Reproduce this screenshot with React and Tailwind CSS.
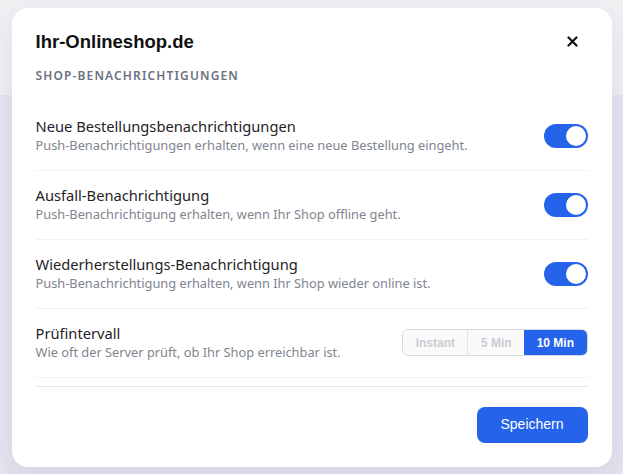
import React, { useState } from 'react';

function Toggle({ on, onChange }) {
  return (
    <button
      onClick={() => onChange(!on)}
      className={`relative w-[44px] h-[24px] rounded-full shrink-0 ${on ? 'bg-[#2563eb]' : 'bg-gray-300'}`}
    >
      <span
        className={`absolute top-[2px] w-[20px] h-[20px] rounded-full bg-white ${on ? 'left-[22px]' : 'left-[2px]'}`}
      />
    </button>
  );
}

function SettingRow({ title, desc, children }) {
  return (
    <div className="flex items-center justify-between py-[15px] border-b border-[#f1f2f4]">
      <div className="flex flex-col -mt-[1px] mb-[1px]">
        <span className="text-[14.7px] leading-[20px] text-[#1f2328]">{title}</span>
        <span className="text-[12.8px] leading-[18px] text-[#80858f]">{desc}</span>
      </div>
      {children}
    </div>
  );
}

export default function App() {
  const [orders, setOrders] = useState(true);
  const [outage, setOutage] = useState(true);
  const [restore, setRestore] = useState(true);
  const [interval, setInterval] = useState('10');

  const segments = [
    { id: 'instant', label: 'Instant' },
    { id: '5', label: '5 Min' },
    { id: '10', label: '10 Min' },
  ];

  return (
    <div className="relative min-h-screen flex items-center justify-center bg-[#e6e6f1] font-['Noto_Sans',sans-serif]">
      <div className="absolute inset-x-0 top-0 h-[95px] bg-[#f1f1f4]" />
      <div className="relative w-[600px] bg-white rounded-2xl px-6 pt-6 pb-6 shadow-[0_10px_30px_rgba(60,60,110,0.12)]">
        <div className="flex items-center justify-between h-[22px] -mt-[1px] mb-[1px]">
          <h1 className="font-['Liberation_Sans',Arial,sans-serif] text-[18.5px] font-bold text-[#111] leading-[22px]">
            Ihr-Onlineshop.de
          </h1>
          <button className="w-[22px] h-[22px] flex items-center justify-center mr-[4px]">
            <svg width="11" height="11" viewBox="0 0 11 11">
              <path d="M1.5 1.5 L9.5 9.5 M9.5 1.5 L1.5 9.5" stroke="#111" strokeWidth="2.2" strokeLinecap="round" />
            </svg>
          </button>
        </div>

        <div className="mt-[15px] mb-[18px] text-[12px] leading-[16px] font-semibold tracking-[0.095em] uppercase text-[#6b7280]">
          Shop-Benachrichtigungen
        </div>

        <SettingRow
          title="Neue Bestellungsbenachrichtigungen"
          desc="Push-Benachrichtigungen erhalten, wenn eine neue Bestellung eingeht."
        >
          <Toggle on={orders} onChange={setOrders} />
        </SettingRow>
        <SettingRow
          title="Ausfall-Benachrichtigung"
          desc="Push-Benachrichtigung erhalten, wenn Ihr Shop offline geht."
        >
          <Toggle on={outage} onChange={setOutage} />
        </SettingRow>
        <SettingRow
          title="Wiederherstellungs-Benachrichtigung"
          desc="Push-Benachrichtigung erhalten, wenn Ihr Shop wieder online ist."
        >
          <Toggle on={restore} onChange={setRestore} />
        </SettingRow>
        <SettingRow
          title="Prüfintervall"
          desc="Wie oft der Server prüft, ob Ihr Shop erreichbar ist."
        >
          <div className="flex h-[27px] rounded-md border border-[#d8dae0] overflow-hidden font-['Liberation_Sans',Arial,sans-serif] text-[12px] font-semibold">
            {segments.map((s, i) => (
              <button
                key={s.id}
                onClick={() => setInterval(s.id)}
                className={`px-[12.5px] ${i === 0 ? 'border-r border-[#e3e5ea]' : ''} ${
                  interval === s.id ? 'bg-[#2563eb] text-white' : 'bg-[#fafafb] text-[#c9ccd3]'
                }`}
              >
                {s.label}
              </button>
            ))}
          </div>
        </SettingRow>

        <div className="mt-2 pt-5 border-t border-[#e6e7eb] flex justify-end">
          <button className="w-[111px] h-[36px] rounded-lg bg-[#2563eb] text-white text-[14px] font-['Liberation_Sans',Arial,sans-serif]">
            Speichern
          </button>
        </div>
      </div>
    </div>
  );
}
